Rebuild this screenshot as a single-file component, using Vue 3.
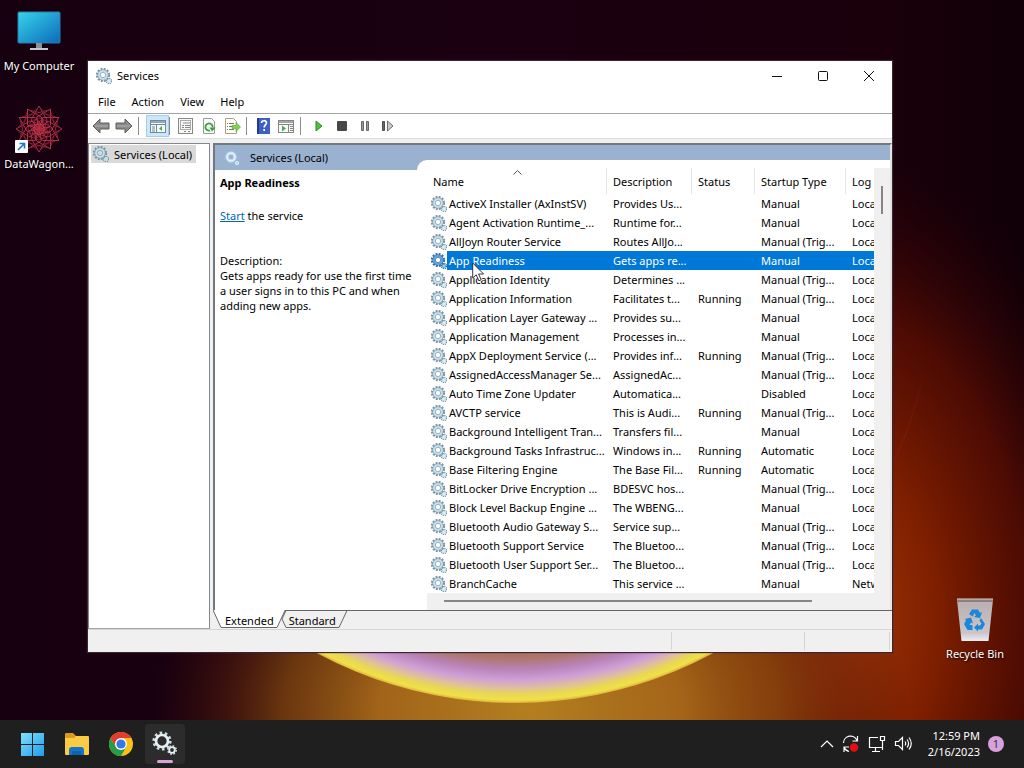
<script setup>
import { ref } from 'vue'

const rows = [
  ['ActiveX Installer (AxInstSV)', 'Provides Us...', '', 'Manual', 'Loca'],
  ['Agent Activation Runtime_...', 'Runtime for...', '', 'Manual', 'Loca'],
  ['AllJoyn Router Service', 'Routes AllJo...', '', 'Manual (Trig...', 'Loca'],
  ['App Readiness', 'Gets apps re...', '', 'Manual', 'Loca'],
  ['Application Identity', 'Determines ...', '', 'Manual (Trig...', 'Loca'],
  ['Application Information', 'Facilitates t...', 'Running', 'Manual (Trig...', 'Loca'],
  ['Application Layer Gateway ...', 'Provides su...', '', 'Manual', 'Loca'],
  ['Application Management', 'Processes in...', '', 'Manual', 'Loca'],
  ['AppX Deployment Service (...', 'Provides inf...', 'Running', 'Manual (Trig...', 'Loca'],
  ['AssignedAccessManager Se...', 'AssignedAc...', '', 'Manual (Trig...', 'Loca'],
  ['Auto Time Zone Updater', 'Automatica...', '', 'Disabled', 'Loca'],
  ['AVCTP service', 'This is Audi...', 'Running', 'Manual (Trig...', 'Loca'],
  ['Background Intelligent Tran...', 'Transfers fil...', '', 'Manual', 'Loca'],
  ['Background Tasks Infrastruc...', 'Windows in...', 'Running', 'Automatic', 'Loca'],
  ['Base Filtering Engine', 'The Base Fil...', 'Running', 'Automatic', 'Loca'],
  ['BitLocker Drive Encryption ...', 'BDESVC hos...', '', 'Manual (Trig...', 'Loca'],
  ['Block Level Backup Engine ...', 'The WBENG...', '', 'Manual', 'Loca'],
  ['Bluetooth Audio Gateway S...', 'Service sup...', '', 'Manual (Trig...', 'Loca'],
  ['Bluetooth Support Service', 'The Bluetoo...', '', 'Manual (Trig...', 'Loca'],
  ['Bluetooth User Support Ser...', 'The Bluetoo...', '', 'Manual (Trig...', 'Loca'],
  ['BranchCache', 'This service ...', '', 'Manual', 'Netw'],
]
const selected = ref(3)
const petals = Array.from({ length: 12 }, (_, i) => i * 30)
const rings = Array.from({ length: 8 }, (_, i) => i * 45)
</script>

<template>
  <div class="screen">
    <svg class="defs" width="0" height="0" aria-hidden="true">
      <defs>
        <symbol id="gears" viewBox="0 0 16 16">
          <g fill="none">
            <circle class="teeth" cx="7" cy="7" r="6" stroke-width="2.2" stroke-dasharray="1.9 1.24" />
            <circle class="edge" cx="7" cy="7" r="5" stroke-width="1" />
            <circle class="body" cx="7" cy="7" r="3.9" stroke-width="1.8" />
            <circle class="edge" cx="7" cy="7" r="2.7" stroke-width=".8" />
            <circle class="teeth" cx="13" cy="13" r="2.5" stroke-width="1.6" stroke-dasharray="1.1 .86" />
            <circle class="body" cx="13" cy="13" r="1.4" stroke-width="1.2" />
          </g>
        </symbol>
      </defs>
    </svg>

    <main class="desktop">
      <svg class="wallpaper" viewBox="0 0 1024 720" preserveAspectRatio="none" aria-hidden="true">
        <defs>
          <linearGradient id="base" x1="0" x2="1" y1="0" y2="0">
            <stop offset="0" stop-color="#17000f" />
            <stop offset=".5" stop-color="#1a0010" />
            <stop offset=".86" stop-color="#1a000b" />
            <stop offset="1" stop-color="#100008" />
          </linearGradient>
          <radialGradient id="red" gradientUnits="userSpaceOnUse" cx="0" cy="0" r="1" gradientTransform="translate(840 620) scale(290 470)">
            <stop offset="0" stop-color="#a33807" />
            <stop offset=".35" stop-color="#7c1e00" />
            <stop offset=".65" stop-color="#570d02" stop-opacity=".85" />
            <stop offset="1" stop-color="#2b0006" stop-opacity="0" />
          </radialGradient>
          <radialGradient id="amber" gradientUnits="userSpaceOnUse" cx="0" cy="0" r="1" gradientTransform="translate(530 710) scale(380 260)">
            <stop offset="0" stop-color="#b47f20" />
            <stop offset=".4" stop-color="#a8691a" stop-opacity=".95" />
            <stop offset=".65" stop-color="#85480f" stop-opacity=".75" />
            <stop offset=".82" stop-color="#60220c" stop-opacity=".45" />
            <stop offset="1" stop-color="#401008" stop-opacity="0" />
          </radialGradient>
          <radialGradient id="orb" gradientUnits="userSpaceOnUse" cx="515" cy="285" r="418">
            <stop offset=".85" stop-color="#a0685a" />
            <stop offset=".89" stop-color="#ac7565" />
            <stop offset=".92" stop-color="#b983b8" />
            <stop offset=".945" stop-color="#cfa0d6" />
            <stop offset=".965" stop-color="#dfc09c" />
            <stop offset=".98" stop-color="#e9d852" />
            <stop offset=".993" stop-color="#efe148" />
            <stop offset="1" stop-color="#dfb03c" />
          </radialGradient>
          <linearGradient id="arc" x1="0" x2="0" y1="0" y2="1">
            <stop offset=".3" stop-color="#8a1c0c" stop-opacity="0" />
            <stop offset=".55" stop-color="#8a1c0c" stop-opacity=".5" />
            <stop offset="1" stop-color="#8a1c0c" stop-opacity=".2" />
          </linearGradient>
          <linearGradient id="lower" x1="0" x2="0" y1="0" y2="1">
            <stop offset=".8" stop-color="#fff" stop-opacity="0" />
            <stop offset=".86" stop-color="#fff" />
          </linearGradient>
          <mask id="orbMask"><rect width="1024" height="720" fill="url(#lower)" /></mask>
        </defs>
        <rect width="1024" height="720" fill="url(#base)" />
        <rect width="1024" height="720" fill="url(#red)" />
        <rect width="1024" height="720" fill="url(#amber)" />
        <path d="M933 285A418 418 0 0 1 820 571" fill="none" stroke="url(#arc)" stroke-width="1.500" />
        <g mask="url(#orbMask)"><circle cx="515" cy="285" r="418" fill="url(#orb)" /></g>
      </svg>

      <button class="shortcut computer" type="button">
        <svg width="44" height="40" viewBox="0 0 44 40" aria-hidden="true">
          <defs>
            <linearGradient id="pc" x1="0" y1="0" x2="1" y2="1">
              <stop offset="0" stop-color="#38d3ea" /><stop offset="1" stop-color="#0b6bbb" />
            </linearGradient>
          </defs>
          <rect x="1" y="1" width="42" height="31" rx="1" fill="url(#pc)" stroke="#2b7fa5" />
          <path d="M19 32h6v5h-6z" fill="#8b8f96" /><path d="M13 37h18v2H13z" fill="#c4c7cc" />
        </svg>
        <span>My Computer</span>
      </button>
      <button class="shortcut wagon" type="button">
        <svg width="48" height="48" viewBox="0 0 48 48" aria-hidden="true">
          <g fill="none" stroke="#c93a50" stroke-width=".8" transform="translate(24 23)">
            <path v-for="a in petals" :key="'a' + a" d="M0-23L8-9L4 4L-8-9Z" :transform="`rotate(${a})`" />
            <circle v-for="a in rings" :key="'b' + a" cx="0" cy="-6" r="5" stroke="#a9293f" :transform="`rotate(${a})`" />
            <path v-for="a in petals" :key="'c' + a" d="M-13-16L13-16" stroke="#8e2338" :transform="`rotate(${a + 15})`" />
          </g>
          <rect x="0" y="34" width="13" height="13" rx="1" fill="#fff" />
          <path d="M3 44l6-6M4.500 37.500H9.500V42.500" fill="none" stroke="#1477d4" stroke-width="1.600" />
        </svg>
        <span>DataWagon...</span>
      </button>
      <button class="shortcut bin" type="button">
        <svg width="38" height="44" viewBox="0 0 38 44" aria-hidden="true">
          <defs>
            <linearGradient id="binFill" x1="0" y1="0" x2="0" y2="1">
              <stop offset="0" stop-color="#b9aeb0" /><stop offset=".8" stop-color="#c9c6ca" /><stop offset="1" stop-color="#eceef2" />
            </linearGradient>
          </defs>
          <path d="M1 2h36l-4.500 41h-27z" fill="url(#binFill)" />
          <path d="M1 1h36v3H1z" fill="#8d7f80" /><path d="M1 1h36" stroke="#ddd5d5" />
          <g fill="#1c86dd">
            <path d="M13 16l3-4.500h6l2 3.500 2-1-2 6-6-1 2-1.500-1.500-2.500-2 3.500z" />
            <path d="M25 20l4 6-3 5.500h-4v2l-4-4 4-4v2h2l1.500-2-2-3z" />
            <path d="M9 21l6-1.500 2 6-2-1-1.500 2.500h3v5h-5L8 26l2-3.500z" />
          </g>
        </svg>
        <span>Recycle Bin</span>
      </button>

      <section class="window" aria-label="Services">
        <header class="titlebar">
          <svg class="gear" width="16" height="16"><use href="#gears" /></svg>
          <h1>Services</h1>
          <div class="captions">
            <button type="button" aria-label="Minimize"><svg width="12" height="12"><path d="M1 6.500h10" /></svg></button>
            <button type="button" aria-label="Maximize"><svg width="12" height="12"><rect x="1.500" y="1.500" width="9" height="9" rx="1" /></svg></button>
            <button type="button" aria-label="Close"><svg width="12" height="12"><path d="M1 1l10 10M11 1L1 11" /></svg></button>
          </div>
        </header>
        <nav class="menubar">
          <button type="button">File</button><button type="button">Action</button><button type="button">View</button><button type="button">Help</button>
        </nav>

        <div class="toolbar">
          <button type="button" aria-label="Back"><svg width="18" height="16" viewBox="0 0 18 16"><path d="M1 8l7-7v4h9v6H8v4z" fill="#8b8b8b" stroke="#5e5e5e" /><path d="M3 8h13" stroke="#b0b0b0" /></svg></button>
          <button type="button" aria-label="Forward"><svg width="18" height="16" viewBox="0 0 18 16"><path d="M17 8l-7-7v4H1v6h9v4z" fill="#8b8b8b" stroke="#5e5e5e" /><path d="M2 8h13" stroke="#b0b0b0" /></svg></button>
          <i class="sep"></i>
          <button type="button" class="pressed" aria-label="Show console tree"><svg width="18" height="16" viewBox="0 0 18 16" fill="none" stroke="#71899b"><rect x="1.500" y="2.500" width="15" height="12" fill="#f5fafd" /><path d="M2 4h14" stroke="#91a9b9" stroke-width="2" /><path d="M2 6.500h14M7.500 7v7" /><path d="M3 9h3M3 11h3M3 13h3" /><path d="M13 8v5l-3-2.500z" fill="#4ca94b" stroke="none" /></svg></button>
          <i class="sep"></i>
          <button type="button" aria-label="Properties"><svg width="16" height="16" viewBox="0 0 16 16" fill="none" stroke="#888"><rect x=".5" y=".5" width="14" height="15" fill="#f8f8f8" /><path d="M5 5h7M4 7.500h2M7 7.500h5M4 9.500h2M7 9.500h5" /><rect x="2.500" y="2.500" width="10" height="9" stroke="#aaa" /><path d="M6 13.500h2M10 13.500h2" /></svg></button>
          <button type="button" aria-label="Refresh"><svg width="16" height="16" viewBox="0 0 16 16" fill="none"><path d="M2.500.5h8l3 3v12h-11z" fill="#fafafa" stroke="#999" /><path d="M9 12.500A3.600 3.600 0 1 1 11.600 9.500" stroke="#37a33a" stroke-width="1.800" /><path d="M8.500 9.500h6L11 13.500z" fill="#37a33a" /></svg></button>
          <button type="button" aria-label="Export list"><svg width="17" height="16" viewBox="0 0 17 16" fill="none"><path d="M1.500.5h8l3 3v12h-11z" fill="#fffdf2" stroke="#aaa085" /><path d="M3 5.500h1M5 5.500h5M3 8.500h1M5 8.500h4M3 11.500h1M5 11.500h5" stroke="#777" /><path d="M8 7.500h4v-3l4.500 4.500-4.500 4.500v-3H8z" fill="#82cf52" stroke="#4fa832" stroke-width=".6" /></svg></button>
          <i class="sep"></i>
          <button type="button" class="help" aria-label="Help contents"><svg width="13" height="16" viewBox="0 0 13 16"><path d="M0 0h13v16H0z" fill="#3f5fc4" /><path d="M0 0h2v16H0z" fill="#243c90" /><path d="M4.500 5c0-3 5-3 5-.2 0 2-2.300 2.200-2.300 4.700M7.200 11v2" fill="none" stroke="#fff" stroke-width="1.700" /></svg></button>
          <button type="button" aria-label="Show action pane"><svg width="18" height="16" viewBox="0 0 18 16" fill="none" stroke="#858585"><rect x="1.500" y="2.500" width="15" height="12" fill="#fafafa" /><path d="M2 4h14" stroke="#a5a5a5" stroke-width="2" /><path d="M2 6.500h14M11.500 7v7M13 8.500h3M13 10.500h3M13 12.500h3" /><path d="M5 7.500v6l4-3z" fill="#4ca94b" stroke="none" /></svg></button>
          <i class="sep"></i>
          <div class="controls">
            <button type="button" aria-label="Start service"><svg width="12" height="12"><path d="M3 1l6 5-6 5z" fill="#4fc238" stroke="#258c23" /></svg></button>
            <button type="button" aria-label="Stop service"><svg width="12" height="12"><rect x="1" y="1" width="10" height="10" rx="1" fill="#474747" /></svg></button>
            <button type="button" aria-label="Pause service"><svg width="12" height="12"><path d="M2.500 1.500h2v9h-2zM7.500 1.500h2v9h-2z" fill="#999" stroke="#666" /></svg></button>
            <button type="button" aria-label="Restart service"><svg width="14" height="12"><path d="M1.500 1.500h2v9h-2z" fill="#666" stroke="#4c4c4c" /><path d="M6.500 1l5.500 5-5.500 5z" fill="#c9c9c9" stroke="#6c6c6c" /></svg></button>
          </div>
        </div>

        <div class="panes">
          <aside class="tree">
            <button type="button"><svg class="gear" width="16" height="16"><use href="#gears" /></svg><span>Services (Local)</span></button>
          </aside>
          <div class="result">
            <div class="view">
              <div class="band"><svg class="gear light" width="16" height="16"><use href="#gears" /></svg><h2>Services (Local)</h2></div>
              <div class="content">
                <article class="details">
                  <h3>App Readiness</h3>
                  <p class="action"><a href="#start">Start</a> the service</p>
                  <p>Description:</p>
                  <p>Gets apps ready for use the first time a user signs in to this PC and when adding new apps.</p>
                </article>
                <div class="list">
                  <div class="clip">
                    <table>
                      <colgroup><col class="c-name" /><col class="c-desc" /><col class="c-status" /><col class="c-type" /><col /></colgroup>
                      <thead>
                        <tr>
                          <th scope="col">Name<svg class="sort" width="9" height="5"><path d="M.5 4.500l4-4 4 4" fill="none" stroke="#555" /></svg></th>
                          <th scope="col">Description</th><th scope="col">Status</th><th scope="col">Startup Type</th><th scope="col">Log</th>
                        </tr>
                      </thead>
                      <tbody>
                        <tr v-for="(r, i) in rows" :key="r[0]" :class="{ selected: i === selected }" @click="selected = i">
                          <td><div class="name"><svg class="gear" width="16" height="16"><use href="#gears" /></svg><span>{{ r[0] }}</span></div></td>
                          <td>{{ r[1] }}</td><td>{{ r[2] }}</td><td>{{ r[3] }}</td><td>{{ r[4] }}</td>
                        </tr>
                      </tbody>
                    </table>
                  </div>
                  <div class="vbar"><i></i></div>
                  <div class="hbar"><i></i></div>
                </div>
              </div>
            </div>
            <div class="tabs">
              <svg class="tabshape" width="136" height="19" viewBox="0 0 136 19" aria-hidden="true">
                <path d="M73 17.500L69 9l4-8.500h61l-8 17z" fill="#f0f0f0" stroke="#666" />
                <path d="M0 0l8 17.500h56L72 0z" fill="#fff" />
                <path d="M0 0l8 17.500h56L72 .5" fill="none" stroke="#666" />
              </svg>
              <button type="button">Extended</button><button type="button">Standard</button>
            </div>
          </div>
        </div>
        <footer class="status"><i></i><i></i><i></i></footer>
      </section>

      <svg class="cursor" width="13" height="20" viewBox="0 0 13 20" aria-hidden="true"><path d="M.7 1v15l3.500-3.200 2.600 6 2.400-1-2.600-5.800h5z" fill="#fff" stroke="#222" stroke-width=".9" /></svg>
    </main>

    <footer class="taskbar">
      <div class="apps">
        <button type="button" aria-label="Start"><svg width="24" height="24"><defs><linearGradient id="win" x1="0" y1="0" x2="1" y2="1"><stop offset="0" stop-color="#7fe0fb" /><stop offset="1" stop-color="#1f9dea" /></linearGradient></defs><path d="M0 1h11v11H0zM12 1h11v11H12zM0 13h11v11H0zM12 13h11v11H12z" fill="url(#win)" /></svg></button>
        <button type="button" aria-label="File Explorer"><svg width="26" height="24"><path d="M1 2q0-1 1-1h7l3 3v5H1z" fill="#dc9a1c" /><path d="M1 6h9l2-2h12q1 0 1 1v17q0 1-1 1H2q-1 0-1-1z" fill="#fccb45" /><path d="M5 23v-5q0-3 3-3h9q3 0 3 3v5z" fill="#1475c6" /><path d="M8 19h9v4H8z" fill="#0f62b0" /></svg></button>
        <button type="button" aria-label="Chrome"><svg width="24" height="24" viewBox="0 0 24 24"><circle cx="12" cy="12" r="12" fill="#fbc116" /><path d="M12 6h10.400A12 12 0 0 0 1.600 6l5.200 9z" fill="#e33b2e" /><path d="M1.600 6A12 12 0 0 0 12 24l5.200-9H6.800z" fill="#269b48" /><circle cx="12" cy="12" r="6" fill="#fff" /><circle cx="12" cy="12" r="4.600" fill="#3477e5" /></svg></button>
        <button type="button" class="running" aria-label="Services"><svg width="26" height="26" viewBox="0 0 26 26" fill="none"><g stroke="#c9dce3"><circle cx="10" cy="10" r="8.200" stroke-width="2.800" stroke-dasharray="2.600 2.550" /><circle cx="10" cy="10" r="6" stroke-width="2.700" stroke="#e8f0f2" /><circle cx="20" cy="19" r="4.200" stroke-width="1.600" stroke-dasharray="1.700 1.600" /><circle cx="20" cy="19" r="2.800" stroke-width="1.800" stroke="#e8f0f2" /></g></svg></button>
      </div>
      <div class="tray">
        <button type="button" aria-label="Show hidden icons"><svg width="14" height="16"><path d="M1 11l6-6 6 6" /></svg></button>
        <button type="button" aria-label="Windows Update"><svg width="18" height="18"><path d="M1.500 8A7 7 0 0 1 15 5.500M15.500 1v5h-5M2 17v-5h5M2 12a7 7 0 0 0 5 4.500" /><circle cx="12" cy="12.500" r="4.200" fill="#e80d14" stroke="none" /></svg></button>
        <button type="button" aria-label="Network"><svg width="18" height="18"><path d="M10 2.500H1.500v10H14.500V9M7.500 12.500v4M4 16.500h8M12.500 1.500h4v4h-4zM14.500 6v9" /></svg></button>
        <button type="button" aria-label="Volume"><svg width="18" height="18"><path d="M1.500 6.500h3l4-4v12l-4-4h-3zM11 6.500q1.500 2 0 4M13 4.500q3.200 4 0 8M15 2.500q4.500 6 0 12" /></svg></button>
        <div class="clock"><span>12:59 PM</span><span>2/16/2023</span></div>
        <b class="badge">1</b>
      </div>
    </footer>
  </div>
</template>

<style>
body { margin: 0; overflow: hidden; background: #17000f; }
</style>

<style scoped>
.screen { height: 100vh; display: flex; flex-direction: column; font-family: "Noto Sans", "Open Sans", sans-serif; font-size: 11px; line-height: 15px; color: #000; }
.defs { position: absolute; }
button { font: inherit; color: inherit; border: 0; padding: 0; margin: 0; background: none; }
svg { display: block; flex: none; }
h1, h2, h3, p { margin: 0; font-size: 11px; font-weight: 400; }
i { display: block; }
.gear { --teeth: #7594a6; --edge: #7f9eb0; --body: #c6dfee; }
.light { --teeth: #9ab9d8; --edge: #c9def0; --body: #e3f0fb; }
.teeth { stroke: var(--teeth); }
.edge { stroke: var(--edge); }
.body { stroke: var(--body); }

.desktop { position: relative; flex: 1; min-height: 0; overflow: hidden; }
.wallpaper { position: absolute; inset: 0; width: 100%; height: 100%; }
.shortcut { position: absolute; width: 78px; display: flex; flex-direction: column; align-items: center; color: #fff; text-shadow: 1px 1px 2px #000; white-space: nowrap; }
.computer { left: 0; top: 11px; gap: 7px; }
.wagon { left: 0; top: 106px; gap: 2px; }
.bin { right: 10px; bottom: 59px; gap: 4px; }
.cursor { position: absolute; left: 472px; top: 262px; }

.window { position: absolute; left: 88px; right: 132px; top: 61px; bottom: 68px; display: flex; flex-direction: column; background: #f0f0f0; box-shadow: 0 0 1px 1px #3b2530; }
.titlebar { height: 29px; display: flex; align-items: center; gap: 5px; padding-left: 8px; background: #fff; }
.titlebar h1 { flex: 1; }
.captions { display: flex; align-self: stretch; }
.captions button { width: 46px; display: grid; place-items: center; }
.captions svg { fill: none; stroke: #111; stroke-width: 1; }
.menubar { height: 23px; display: flex; align-items: center; gap: 16px; padding-left: 10px; background: #fff; border-bottom: 1px solid #a5a5a5; }
.toolbar { height: 24px; display: flex; align-items: center; padding-left: 4px; gap: 5px; background: #fff; border-bottom: 1px solid #dedede; }
.toolbar button { display: grid; place-items: center; min-width: 18px; }
.toolbar .pressed { width: 23px; height: 22px; margin-right: -5px; background: #cce6fa; outline: 1px solid #a5cdec; outline-offset: -1px; }
.sep { width: 1px; height: 18px; background: #8c8c8c; margin-right: 2px; }
.controls { display: flex; gap: 5px; padding-left: 2px; }

.panes { flex: 1; min-height: 0; display: flex; gap: 3px; margin-top: 4px; }
.tree { width: 120px; border: 1px solid #828790; border-bottom-color: #a5a5a5; background: #fff; }
.tree button { display: flex; align-items: center; gap: 5px; height: 18px; margin: 1px 2px; padding: 0 4px 0 2px; background: #d9d9d9; white-space: nowrap; }
.result { flex: 1; min-width: 0; display: flex; flex-direction: column; }
.view { flex: 1; min-height: 0; display: flex; flex-direction: column; border: 2px solid #73777e; border-right-color: #e4e4e4; border-bottom: 0; background: #fff; }
.band { height: 25px; flex: none; display: flex; align-items: center; gap: 10px; padding-left: 9px; background: #9ab2d0; }
.content { flex: 1; min-height: 0; display: flex; }
.details { width: 202px; box-sizing: border-box; padding: 5px 3px 0 5px; }
.details h3 { font-weight: 700; margin-bottom: 18px; }
.action { margin-bottom: 30px; }
a { color: #0067b8; }
.list { flex: 1; min-width: 0; margin-top: -10px; padding: 8px 0 0 10px; border-top-left-radius: 10px; background: #fff; display: grid; grid-template: minmax(0, 1fr) 17px / minmax(0, 1fr) 16px; }
.clip { overflow: hidden; }
table { width: 100%; table-layout: fixed; border-collapse: separate; border-spacing: 0; white-space: nowrap; }
.c-name { width: 180px; } .c-desc { width: 85px; } .c-status { width: 63px; } .c-type { width: 91px; }
th { height: 26px; padding: 1px 6px 1px; text-align: left; font-weight: 400; border-right: 1px solid #e5e5e5; box-sizing: border-box; position: relative; }
th:last-child { border: 0; padding-right: 0; }
.sort { position: absolute; left: 86px; top: 2px; }
td { height: 19px; padding: 0 0 0 6px; }
td:first-child { padding-left: 4px; }
td:last-child { overflow: hidden; }
.name { display: flex; align-items: center; gap: 2px; }
.selected td { background: #0078d7; color: #fff; }
.selected td:first-child { background: linear-gradient(90deg, #fff 20px, #0078d7 20px); }
.selected .gear { --teeth: #2c6ea5; --edge: #2c6ea5; --body: #5ba3da; }
.vbar { background: #f0f0f0; padding: 18px 7px 0; }
.vbar i { height: 28px; width: 2px; background: #858585; }
.hbar { grid-column: 1 / -1; background: #f0f0f0; padding: 7px 78px 0 17px; }
.hbar i { height: 2px; background: #858585; }
.tabs { height: 18px; position: relative; display: flex; gap: 15px; padding-left: 12px; border-top: 1px solid #666; align-items: center; }
.tabs button { position: relative; }
.tabshape { position: absolute; left: 0; top: -1px; }
.status { height: 22px; display: flex; justify-content: flex-end; border-top: 1px solid #d5d5d5; padding-right: 2px; }
.status i { border-right: 1px solid #d5d5d5; width: 84px; margin: 2px 0; }
.status i:nth-child(2) { width: 132px; }

.taskbar { height: 48px; flex: none; display: flex; justify-content: space-between; background: #1f1f1f; padding: 0 20px 0 13px; }
.apps, .tray { display: flex; align-items: center; gap: 4px; }
.apps button { width: 40px; height: 40px; display: grid; place-items: center; position: relative; }
.apps .running { background: #2c2c2c; border-radius: 4px; }
.running::after { content: ""; position: absolute; bottom: 1px; left: 12px; width: 16px; height: 3px; border-radius: 2px; background: #d8a6d6; }
.tray { color: #fff; gap: 8px; }
.tray svg { fill: none; stroke: #fff; stroke-width: 1.2; }
.clock { display: flex; flex-direction: column; align-items: flex-end; line-height: 16px; width: 60px; }
.badge { width: 16px; height: 16px; border-radius: 50%; background: #d8a0dc; color: #333; font-size: 11px; line-height: 16px; font-weight: 400; text-align: center; }
</style>
